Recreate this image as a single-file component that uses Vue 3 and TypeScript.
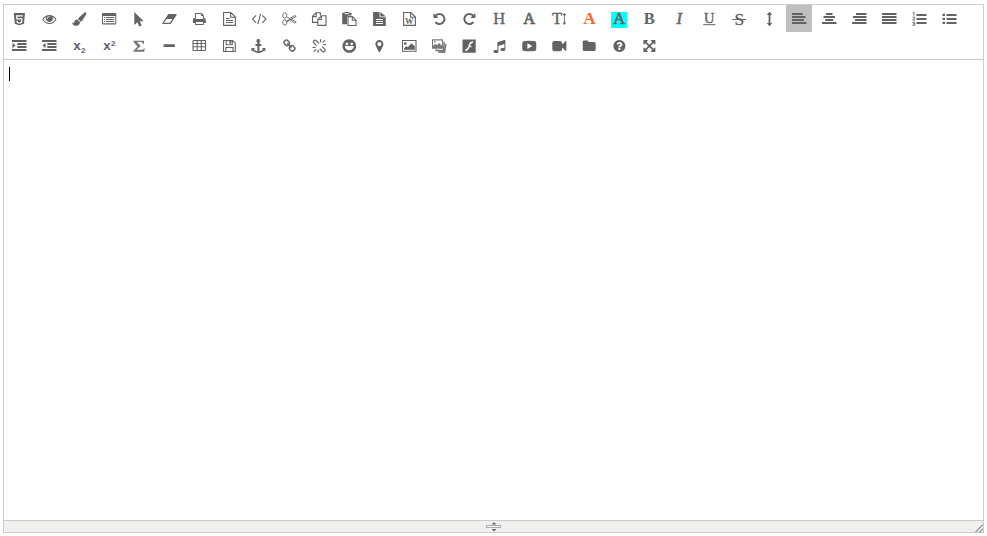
<script setup lang="ts">
import { ref } from 'vue'

interface Label {
  t: string
  x?: number
  y?: number
  size?: number
  cls?: string
}
interface Tool {
  name: string
  /** glyph outline on a 1792 unit em, drawn 14px wide */
  em?: string
  flip?: boolean
  /** filled and stroked shapes on the 18px grid */
  fill?: string
  line?: string
  w?: number
  labels?: Label[]
  tone?: string
}

const page = 'M3.6 2.5H10.8L15.4 7.1V15.4H3.6ZM10.6 2.5V7.3H15.4'
const undo =
  'M1664 896q0 156-61 298t-164 245-245 164-298 61q-172 0-327-72.5t-264-204.5q-7-10-6.5-22.5t8.5-20.5l137-138q10-9 25-9 16 2 23 12 73 95 179 147t225 52q104 0 198.5-40.5t163.5-109.5 109.5-163.5 40.5-198.5-40.5-198.5-109.5-163.5-163.5-109.5-198.5-40.5q-98 0-188 35.5t-160 101.5l137 138q31 30 14 69-17 40-59 40h-448q-26 0-45-19t-19-45v-448q0-42 40-59 39-17 69 14l130 129q107-101 244.5-156.5t284.5-55.5q156 0 298 61t245 164 164 245 61 298z'

const tools: Tool[] = [
  { name: 'HTML', fill: 'M3.8 3H15L14 13.7 9.4 15.2 4.8 13.7ZM6 5.2 6.4 9.6H11.3L11.1 11.8 9.4 12.4 7.8 11.9 7.7 10.8H6.5L6.7 12.8 9.4 13.7 12.2 12.8 12.6 8.3H7.6L7.4 6.5H12.8L12.9 5.2Z' },
  { name: 'Preview', em: 'M1664 960q-152-236-381-353 61 104 61 225 0 185-131.5 316.5t-316.5 131.5-316.5-131.5-131.5-316.5q0-121 61-225-229 117-381 353 133 205 333.5 326.5t434.5 121.5 434.5-121.5 333.5-326.5zm-720-384q0-20-14-34t-34-14q-125 0-214.5 89.5t-89.5 214.5q0 20 14 34t34 14 34-14 14-34q0-86 61-147t147-61q20 0 34-14t14-34zm848 384q0 34-20 69-140 230-376.5 368.5t-499.5 138.5-499.5-139-376.5-368q-20-35-20-69t20-69q140-229 376.5-368t499.5-139 499.5 139 376.5 368q20 35 20 69z' },
  { name: 'Format brush', fill: 'M14.6 2.4C15.6 2 16.8 3 16.2 4.2L12.4 10.4 10.7 11.8 7.9 9.1 9.1 7.4ZM7.3 9.6 10.1 12.2C10 14.9 7.6 16 5.2 15.8 3.4 15.5 2.4 14.3 2.2 12.4 3.2 13 3.8 13.1 4.3 11.9 4.9 10.2 5.9 9.4 7.3 9.6Z' },
  { name: 'Templates', fill: 'M3.2 3H15Q16.3 3 16.3 4.3V13.2Q16.3 14.5 15 14.5H3.2Q2 14.5 2 13.2V4.3Q2 3 3.2 3ZM3 6V13.3H15.3V6ZM4 7H5.2V8H4ZM6 7H14.3V8H6ZM4 9H5.2V10H4ZM6 9H14.3V10H6ZM4 11H5.2V12H4ZM6 11H14.3V12H6Z' },
  { name: 'Select all', fill: 'M4.3 2 13.7 11.3H9.7L11.7 15.5 9.3 16.4 7.4 12.2 4.3 15Z' },
  { name: 'Clear document', fill: 'M8.4 4H16.2Q16.9 4.2 16.6 5L10.6 13.9H2.8Q2 13.6 2.4 12.9ZM3.9 12.8H9.8L12.4 9H6.5Z' },
  { name: 'Print', em: 'M448 1536h896v-256h-896v256zm0-640h896v-384h-160q-40 0-68-28t-28-68v-160h-640v640zm1152 64q0-26-19-45t-45-19-45 19-19 45 19 45 45 19 45-19 19-45zm128 0v416q0 13-9.5 22.5t-22.5 9.5h-224v160q0 40-28 68t-68 28h-960q-40 0-68-28t-28-68v-160h-224q-13 0-22.5-9.5t-9.5-22.5v-416q0-79 56.5-135.5t135.5-56.5h64v-544q0-40 28-68t68-28h672q40 0 88 20t76 48l152 152q28 28 48 76t20 88v256h64q79 0 135.5 56.5t56.5 135.5z' },
  { name: 'Page', line: page + 'M6 8.5H9.5M6 10.5H13M6 12.5H13' },
  { name: 'Source code', line: 'M6.1 5.3 2.5 9 6.1 12.8M12.3 5.3 16 9 12.3 12.8M10.6 3.9 7.8 14.1' },
  { name: 'Cut', w: 0.95, line: 'M6.5 5.8A1.9 1.9 0 1 0 3 5.2 1.9 1.9 0 1 0 6.5 5.8ZM6.5 12.2A1.9 1.9 0 1 0 3 12.8 1.9 1.9 0 1 0 6.5 12.2ZM6.4 6.7 9.6 8.6 14.7 5.6 16.2 6.3 7 11.8M6.4 11.3 9.6 9.4 14.7 13 16.2 12.2 10.8 8.8' },
  { name: 'Copy', line: 'M7.8 12.4H2.5V6.3L6 2.7H10.4V5.6M2.5 6.6H6.2V2.7M7.8 9.4 11.4 5.8H16V15.4H7.8ZM7.8 9.5H11.4V5.8' },
  { name: 'Paste', fill: 'M2.2 2.7H4.6V2H9V2.7H11.5V5.5H8.6L7 6.4V14.3H2.2ZM4.8 3.2V4.2H8.9V3.2Z', line: 'M8 6.6H12.4L16 10.2V15.5H8ZM12.3 6.6V10.3H16' },
  { name: 'Paste as text', fill: 'M3.1 2H9.6V7.3H15.8V16H3.1ZM10.4 2 15.8 6.6H10.4ZM6 9V9.9H13V9ZM6 11V11.9H13V11ZM6 13V13.9H13V13Z' },
  { name: 'Paste from Word', line: page, labels: [{ t: 'W', y: 14, size: 8.5, cls: 'bold' }] },
  { name: 'Undo', em: undo },
  { name: 'Redo', em: undo, flip: true },
  { name: 'Heading', labels: [{ t: 'H', y: 14.3, size: 16.5 }] },
  { name: 'Font', labels: [{ t: 'A', y: 14.3, size: 16.5, cls: 'semi' }] },
  { name: 'Font size', labels: [{ t: 'T', x: 7, y: 14.3, size: 16.5 }], line: 'M14.4 4.5V13.3', fill: 'M12.6 5.3 14.4 2.8 16.2 5.3ZM12.6 12.6 14.4 15 16.2 12.6Z', w: 0.9 },
  { name: 'Text colour', tone: 'orange', labels: [{ t: 'A', y: 14.3, size: 17, cls: 'bold' }] },
  { name: 'Highlight', tone: 'mark', labels: [{ t: 'A', y: 14.3, size: 16.5, cls: 'semi' }] },
  { name: 'Bold', labels: [{ t: 'B', y: 14.3, size: 16.5, cls: 'bold' }] },
  { name: 'Italic', labels: [{ t: 'I', y: 14.3, size: 16.5, cls: 'italic' }] },
  { name: 'Underline', labels: [{ t: 'U', y: 12.8, size: 14.5 }], line: 'M3.2 14.7H15.4', w: 1 },
  { name: 'Strikethrough', labels: [{ t: 'S', y: 14.6, size: 17.5 }], line: 'M2.5 9.5H16.2', w: 1 },
  { name: 'Line height', fill: 'M9.5 1.8 12.3 5H10.4V13H12.3L9.5 16.2 6.7 13H8.6V5H6.7Z' },
  { name: 'Align left', fill: 'M2 3H12.7V5H2ZM2 6H15.5V8H2ZM2 9H14V11H2ZM2 12H16.5V14H2Z' },
  { name: 'Align centre', fill: 'M6 3H12.5V5H6ZM3.5 6H15V8H3.5ZM5.2 9H13.2V11H5.2ZM2 12H16.5V14H2Z' },
  { name: 'Align right', fill: 'M6 3H16.5V5H6ZM3 6H16.5V8H3ZM5 9H16.5V11H5ZM2 12H16.5V14H2Z' },
  { name: 'Justify', fill: 'M2 3H16.5V5H2ZM2 6H16.5V8H2ZM2 9H16.5V11H2ZM2 12H16.5V14H2Z' },
  { name: 'Numbered list', fill: 'M6.5 4H16.5V6H6.5ZM6.5 8H16.5V10H6.5ZM6.5 12H16.5V14H6.5Z', line: 'M2.8 2.9 3.9 2.3V5.7M2.4 7.2H4.8V8.5L2.6 10.1H5M2.4 12.3H4.6V15.3H2.3M3 13.8H4.6', w: 0.9 },
  { name: 'Bulleted list', fill: 'M6.5 4H16.5V6H6.5ZM6.5 8H16.5V10H6.5ZM6.5 12H16.5V14H6.5ZM2.5 3.8H5V6.1H2.5ZM2.5 7.8H5V10.1H2.5ZM2.5 11.8H5V14.1H2.5Z' },
  { name: 'Indent', fill: 'M2 3H16.5V5H2ZM7.3 6H16.5V8H7.3ZM7.3 9H16.5V11H7.3ZM2 12H16.5V14H2ZM2.5 5.7 5.5 8.5 2.5 11.3Z' },
  { name: 'Outdent', fill: 'M2 3H16.5V5H2ZM7.3 6H16.5V8H7.3ZM7.3 9H16.5V11H7.3ZM2 12H16.5V14H2ZM5.5 5.7 2.5 8.5 5.5 11.3Z' },
  { name: 'Subscript', labels: [{ t: 'x', x: 7, y: 13.4, size: 13.5, cls: 'sans' }, { t: '2', x: 13.2, y: 15.8, size: 8, cls: 'sans' }] },
  { name: 'Superscript', labels: [{ t: 'x', x: 7, y: 13.4, size: 13.5, cls: 'sans' }, { t: '2', x: 13.2, y: 8.8, size: 8, cls: 'sans' }] },
  { name: 'Formula', tone: 'soft', fill: 'M3.4 3.7H14V6.7H12.9Q12.7 5.1 11 5.1H7L10.6 9 6.7 12.8H12Q13.5 12.8 13.9 11.5H14.8L14.2 14.8H3.3V13.9L7.5 9.4 3.4 4.8Z' },
  { name: 'Horizontal rule', fill: 'M4.2 7.2H14.2Q14.9 7.2 14.9 7.8V9.5Q14.9 10.1 14.2 10.1H4.2Q3.5 10.1 3.5 9.5V7.8Q3.5 7.2 4.2 7.2Z' },
  { name: 'Table', line: 'M3.5 3.5H15Q15.5 3.5 15.5 4V13Q15.5 13.5 15 13.5H3.5Q3 13.5 3 13V4Q3 3.5 3.5 3.5ZM3 6.5H15.5M3 9.8H15.5M7.2 3.5V13.5M11.3 3.5V13.5' },
  { name: 'Save draft', line: 'M3.5 3.5H12.5L15.3 6.2V14.5H3.5ZM5.8 14.5V10.5H13V14.5M6.2 3.5V7.7H12.2V3.5', fill: 'M9.3 4H11.2V6.6H9.3Z' },
  { name: 'Anchor', em: 'M960 256q0-26-19-45t-45-19-45 19-19 45 19 45 45 19 45-19 19-45zm704 928v352q0 22-20 30-8 2-12 2-12 0-23-9l-93-93q-119 143-318.5 226.5t-429.5 83.5-429.5-83.5-318.5-226.5l-93 93q-9 9-23 9-4 0-12-2-20-8-20-30v-352q0-14 9-23t23-9h352q22 0 30 20 8 19-7 35l-100 100q67 91 189.5 153.5t271.5 82.5v-647h-192q-26 0-45-19t-19-45v-128q0-26 19-45t45-19h192v-163q-58-34-93-92.5t-35-128.5q0-106 75-181t181-75 181 75 75 181q0 70-35 128.5t-93 92.5v163h192q26 0 45 19t19 45v128q0 26-19 45t-45 19h-192v647q149-20 271.5-82.5t189.5-153.5l-100-100q-15-16-7-35 8-20 30-20h352q14 0 23 9t9 23z' },
  { name: 'Link', em: 'M1520 1216q0-40-28-68l-208-208q-28-28-68-28-42 0-72 32 3 3 19 18.5t21.5 21.5 15 19 13 25.5 3.5 27.5q0 40-28 68t-68 28q-15 0-27.5-3.5t-25.5-13-19-15-21.5-21.5-18.5-19q-33 31-33 73 0 40 28 68l206 207q27 27 68 27 40 0 68-26l147-146q28-28 28-67zm-703-705q0-40-28-68l-206-207q-28-28-68-28-39 0-68 27l-147 146q-28 28-28 67 0 40 28 68l208 208q27 27 68 27 42 0 72-31-3-3-19-18.5t-21.5-21.5-15-19-13-25.5-3.5-27.5q0-40 28-68t68-28q15 0 27.5 3.5t25.5 13 19 15 21.5 21.5 18.5 19q33-31 33-73zm895 705q0 120-85 203l-147 146q-83 83-203 83-121 0-204-85l-206-207q-83-83-83-203 0-123 88-209l-88-88q-86 88-208 88-120 0-204-84l-208-208q-84-84-84-204t85-203l147-146q83-83 203-83 121 0 204 85l206 207q83 83 83 203 0 123-88 209l88 88q86-88 208-88 120 0 204 84l208 208q84 84 84 204z' },
  { name: 'Unlink', line: 'M9 6.2 6 3.4Q5.1 2.7 4.3 3.5L3.7 4.1Q3 4.9 3.7 5.7L6.4 8.6M9.7 11.8 12.7 14.6Q13.5 15.2 14.2 14.5L14.9 13.8Q15.5 13.1 14.9 12.3L12.2 9.4M10.6 2.2V5.2M12.6 5.6 15 3.2M13 7.5H16M2.6 10.5H5.6M3.7 14.7 6.1 12.3M8 12.8V15.8', w: 1.2 },
  { name: 'Emoticons', fill: 'M9.3 2.2A6.8 6.8 0 1 1 9.29 2.2ZM6.9 5.5A1.35 1.35 0 1 0 6.91 5.5ZM11.7 5.5A1.35 1.35 0 1 0 11.71 5.5ZM4.7 9.1Q5.1 13.2 9.3 13.3 13.5 13.2 13.9 9.1Z' },
  { name: 'Map', em: 'M1152 640q0-106-75-181t-181-75-181 75-75 181 75 181 181 75 181-75 75-181zm256 0q0 109-33 179l-364 774q-16 33-47.5 52t-67.5 19-67.5-19-46.5-52l-365-774q-33-70-33-179 0-212 150-362t362-150 362 150 150 362z' },
  { name: 'Image', line: 'M2.5 3.5H16V14.2H2.5Z', fill: 'M6.6 6.6A1.4 1.4 0 1 1 3.8 6.6 1.4 1.4 0 1 1 6.6 6.6ZM4 12.8V11.2L6.4 9 7.6 10.3 11.6 6.3 14.8 9.3V12.8Z' },
  { name: 'Multiple images', tone: 'soft', fill: 'M2 2.3H13V11.7H2ZM3.1 3.5V9L5.5 6.7 7.2 8.2 9 5.8 11.9 8.9V3.5ZM4 4.3H5.5V5.6H4Z', line: 'M5 13.2 13.4 13.8 14.3 4.7M8.2 15 14.6 15.2 15.9 6.8', w: 1.4 },
  { name: 'Flash', fill: 'M2.5 2.5H15.7V15.7H2.5ZM13 4.2Q9.9 4.2 8.9 7.2L8 9.9Q7.1 12.2 5.2 12.5V14Q8.4 13.7 9.4 10.2H11.4V8.7H9.9Q10.8 5.8 13 5.8Z' },
  { name: 'Music', em: 'M1664 224v1120q0 50-34 89t-86 60.5-103.5 32-96.5 10.5-96.5-10.5-103.5-32-86-60.5-34-89 34-89 86-60.5 103.5-32 96.5-10.5q105 0 192 39v-537l-768 237v709q0 50-34 89t-86 60.5-103.5 32-96.5 10.5-96.5-10.5-103.5-32-86-60.5-34-89 34-89 86-60.5 103.5-32 96.5-10.5q105 0 192 39v-967q0-31 19-56.5t49-35.5l832-256q12-4 28-4 40 0 68 28t28 68z' },
  { name: 'Video', fill: 'M4.4 4.1Q9.3 3.6 14.2 4.1 16 4.2 16.2 6 16.5 9.1 16.2 12.2 16 14 14.2 14.1 9.3 14.6 4.4 14.1 2.6 14 2.3 12.2 2 9.1 2.3 6 2.6 4.2 4.4 4.1ZM7.4 6.2V12L12.3 9.1Z' },
  { name: 'Camera', fill: 'M4.2 4H10.2Q12 4 12 5.9V7.6L15.8 4.1Q16.4 4 16.4 4.6V13.5Q16.4 14.2 15.8 14L12 10.5V12.3Q12 14.2 10.2 14.2H4.2Q2.3 14.2 2.3 12.3V5.9Q2.3 4 4.2 4Z' },
  { name: 'Files', fill: 'M4 3.4H7.2Q8.7 3.4 8.8 5H14Q15.7 5 15.7 6.7V12.4Q15.7 14.1 14 14.1H4.4Q2.7 14.1 2.7 12.4V4.8Q2.7 3.4 4 3.4Z' },
  { name: 'Help', em: 'M1024 1376v-192q0-14-9-23t-23-9h-192q-14 0-23 9t-9 23v192q0 14 9 23t23 9h192q14 0 23-9t9-23zm256-672q0-88-55.5-163t-138.5-116-170-41q-243 0-371 213-15 24 8 42l132 100q7 6 19 6 16 0 25-12 53-68 86-92 34-24 86-24 48 0 85.5 26t37.5 59q0 38-20 61t-68 45q-63 28-115.5 86.5t-52.5 125.5v36q0 14 9 23t23 9h192q14 0 23-9t9-23q0-19 21.5-49.5t54.5-49.5q32-18 49-28.5t46-35 44.5-48 28-60.5 12.5-81zm384 192q0 209-103 385.5t-279.5 279.5-385.5 103-385.5-103-279.5-279.5-103-385.5 103-385.5 279.5-279.5 385.5-103 385.5 103 279.5 279.5 103 385.5z' },
  { name: 'Full screen', em: 'M1411 541l-355 355 355 355 144-144q29-31 70-14 39 17 39 59v448q0 26-19 45t-45 19h-448q-42 0-59-40-17-39 14-69l144-144-355-355-355 355 144 144q31 30 14 69-17 40-59 40h-448q-26 0-45-19t-19-45v-448q0-42 40-59 39-17 69 14l144 144 355-355-355-355-144 144q-19 19-45 19-12 0-24-5-40-17-40-59v-448q0-26 19-45t45-19h448q42 0 59 40 17 39-14 69l-144 144 355 355 355-355-144-144q-31-30-14-69 17-40 59-40h448q26 0 45 19t19 45v448q0 42-39 59-13 5-25 5-26 0-45-19z' },
]

const active = ref('Align left')
</script>

<template>
  <div class="editor">
    <div class="toolbar">
      <button
        v-for="tool in tools"
        :key="tool.name"
        type="button"
        class="tool"
        :class="[tool.tone, { active: active === tool.name }]"
        @click="active = tool.name"
      >
        <svg class="icon" viewBox="0 0 18 18">
          <path v-if="tool.em" :d="tool.em" :transform="tool.flip ? 'translate(16.4 2) scale(-0.0078125 0.0078125)' : 'translate(2.4 2) scale(0.0078125)'" />
          <path v-if="tool.fill" :d="tool.fill" fill-rule="evenodd" />
          <path v-if="tool.line" class="line" :d="tool.line" :stroke-width="tool.w ?? 1.1" />
          <text v-for="(l, i) in tool.labels" :key="i" :class="l.cls" :x="l.x ?? 9.3" :y="l.y" :font-size="l.size">{{ l.t }}</text>
        </svg>
      </button>
    </div>
    <div class="content"><span class="caret"></span></div>
    <div class="status">
      <span></span>
      <svg class="handle" viewBox="0 0 16 11">
        <path d="M5.5 3.5 8 1.2 10.5 3.5ZM5.5 8 8 10.5 10.5 8Z" fill="#666" />
        <rect x="0.5" y="4.5" width="14" height="2" fill="#fff" stroke="#aaa" stroke-width="1" />
      </svg>
      <svg class="grip" viewBox="0 0 8 8">
        <path d="M0.5 8 8 0.5M4.5 8 8 4.5" fill="none" stroke="#555" stroke-width="1" />
      </svg>
    </div>
  </div>
</template>

<style>
body {
  background: #fff;
}
</style>

<style scoped>
.editor {
  box-sizing: border-box;
  display: flex;
  flex-direction: column;
  width: 981px;
  height: 529px;
  margin: 4px 0 0 3px;
  border: 1px solid #ccc;
}
.toolbar {
  display: flex;
  flex-wrap: wrap;
  column-gap: 4px;
  padding-left: 2px;
  border-bottom: 1px solid #ccc;
}
.tool {
  box-sizing: border-box;
  width: 26px;
  height: 27px;
  margin: 0;
  padding: 5px 4px 4px;
  border: 0;
  background: none;
  color: #636363;
}
.tool.active {
  background: #bfbfbf;
}
.icon {
  display: block;
  width: 18px;
  height: 18px;
  overflow: visible;
  fill: currentColor;
}
.line {
  fill: none;
  stroke: currentColor;
}
.icon text {
  font-family: 'Liberation Serif', serif;
  text-anchor: middle;
  stroke: currentColor;
  stroke-width: 0.35px;
}
.icon .semi {
  stroke-width: 0.7px;
}
.icon .bold {
  font-weight: bold;
  stroke: none;
}
.icon .italic {
  font-style: italic;
  stroke-width: 0.5px;
}
.icon .sans {
  font-family: 'Liberation Sans', sans-serif;
  font-weight: bold;
  stroke: none;
}
.orange {
  color: #ff6622;
}
.soft {
  color: #777;
}
.mark .icon {
  background: linear-gradient(#0ff, #0ff) 1px 2px / 16px 16px no-repeat;
}
.content {
  flex: 1;
  padding: 7px 5px;
}
.caret {
  display: block;
  width: 1px;
  height: 14px;
  background: #000;
}
.status {
  display: grid;
  grid-template-columns: 1fr 16px 1fr;
  height: 11px;
  border-top: 1px solid #ccc;
  background: #f0f0ee;
}
.handle {
  width: 16px;
  height: 11px;
}
.grip {
  width: 8px;
  height: 8px;
  justify-self: end;
  align-self: end;
}
</style>
